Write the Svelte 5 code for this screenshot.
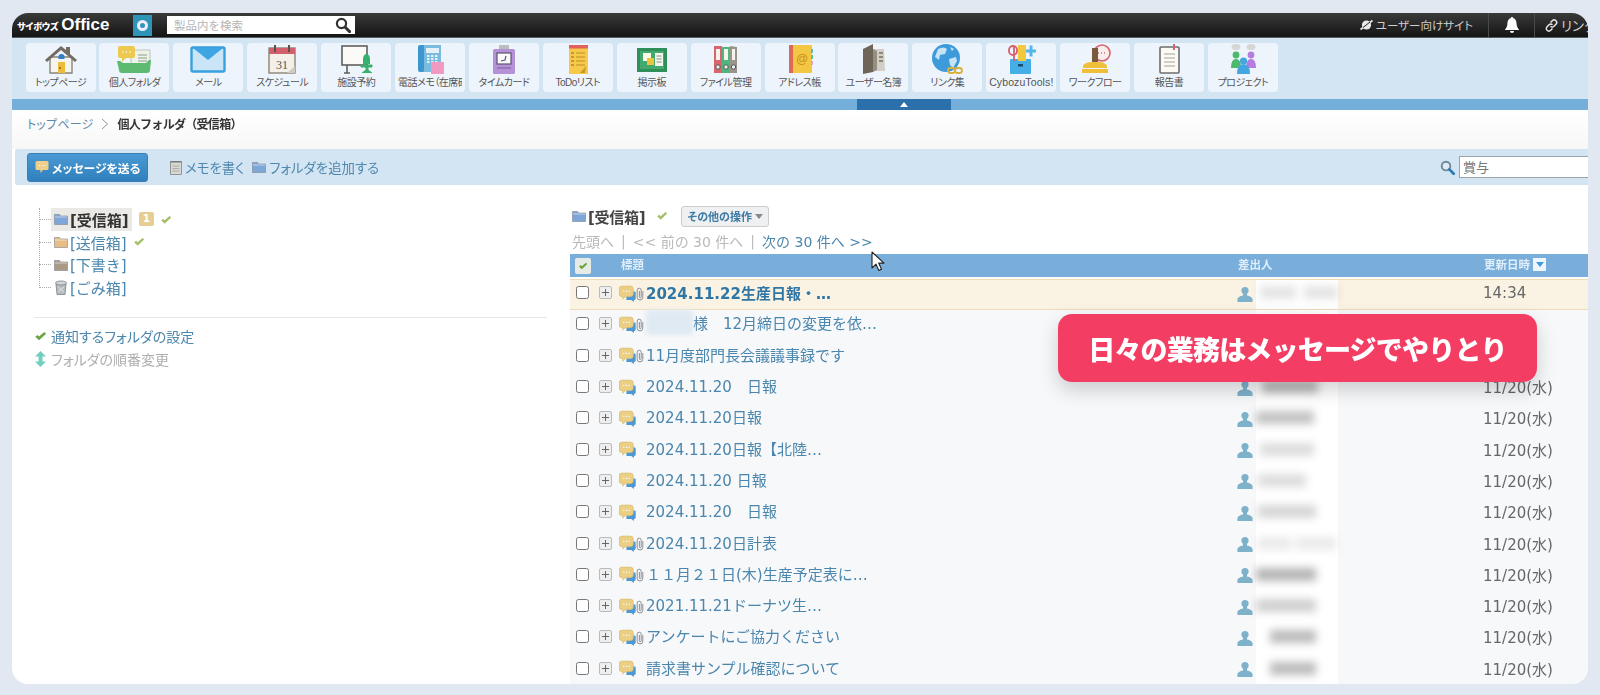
<script>
  const tools = [
    ['home', 'トップページ'], ['personal', '個人フォルダ'], ['mail', 'メール'], ['cal', 'スケジュール'],
    ['room', '施設予約'], ['phone', '電話メモ（在席確認）'], ['card', 'タイムカード'], ['todo', 'ToDoリスト'],
    ['board', '掲示板'], ['files', 'ファイル管理'], ['addr', 'アドレス帳'], ['users', 'ユーザー名簿'],
    ['globe', 'リンク集'], ['tools', 'CybozuTools!'], ['flow', 'ワークフロー'], ['report', '報告書'], ['project', 'プロジェクト']
  ];
  const folders = [
    { name: '[受信箱]', color: '#7ea6d8', active: true, badge: '1', check: true },
    { name: '[送信箱]', color: '#e5bd85', check: true },
    { name: '[下書き]', color: '#a89a85' },
    { name: '[ごみ箱]', trash: true }
  ];
  const rows = [
    { title: '2024.11.22生産日報・…', clip: true, bold: true, time: '14:34', smear: [[4, 36], [8, 34]], op: 0.2 },
    { title: '様　12月締日の変更を依…', clip: true, mask: true, time: '', smear: [[6, 60]], op: 0.2 },
    { title: '11月度部門長会議議事録です', clip: true, time: '', smear: [[6, 50]], op: 0.2 },
    { title: '2024.11.20　日報', time: '11/20(水)', smear: [[6, 56]], op: 0.5 },
    { title: '2024.11.20日報', time: '11/20(水)', smear: [[0, 58]], op: 0.45 },
    { title: '2024.11.20日報【北陸…', time: '11/20(水)', smear: [[4, 54]], op: 0.25 },
    { title: '2024.11.20 日報', time: '11/20(水)', smear: [[2, 48]], op: 0.25 },
    { title: '2024.11.20　日報', time: '11/20(水)', smear: [[2, 58]], op: 0.3 },
    { title: '2024.11.20日計表', clip: true, time: '11/20(水)', smear: [[2, 34], [4, 40]], op: 0.15 },
    { title: '１１月２１日(木)生産予定表に…', clip: true, time: '11/20(水)', smear: [[0, 60]], op: 0.55 },
    { title: '2021.11.21ドーナツ生…', clip: true, time: '11/20(水)', smear: [[0, 60]], op: 0.35 },
    { title: 'アンケートにご協力ください', clip: true, time: '11/20(水)', smear: [[14, 46]], op: 0.5 },
    { title: '請求書サンプル確認について', time: '11/20(水)', smear: [[14, 46]], op: 0.5 }
  ];
</script>

{#snippet check(size, color)}
  <svg class="ic" width={size} height={size * 0.8} viewBox="0 0 12 10"><path d="M1 5.5 L3 3.8 L4.6 5.4 L9.6 1 L11.4 2.6 L4.6 9 Z" fill={color} /></svg>
{/snippet}

{#snippet folder(color)}
  <svg class="ic" width="14" height="12" viewBox="0 0 14 12"><path d="M.5 1.5h5l1 1.5h7v8.5H.5z" fill={color} stroke="#7d8590" stroke-width=".6" /><path d="M1 4h12" stroke="#fff" stroke-opacity=".55" /></svg>
{/snippet}

{#snippet msg()}
  <svg class="ic" width="17" height="17" viewBox="0 0 16 16">
    <path d="M7 6h7.500a1.200 1.200 0 0 1 1.200 1.200v5.600a1.200 1.200 0 0 1-1.200 1.200H14v2l-2.500-2H7z" fill="#4d97d3" />
    <path d="M3 1h7.500A3 3 0 0 1 13.500 4v4a3 3 0 0 1-3 3H6l-2.500 2.300V11H3a3 3 0 0 1-3-3V4a3 3 0 0 1 3-3z" fill="#ebcf85" stroke="#d4b468" stroke-width=".5" />
    <path d="M4 6h1M6.500 6h1M9 6h1" stroke="#fff" stroke-width="1.100" />
  </svg>
{/snippet}

{#snippet clip()}
  <svg class="ic" width="8" height="14" viewBox="0 0 8 14"><path d="M6.800 4v6.200a2.800 2.800 0 0 1-5.600 0V3.200a2 2 0 0 1 4 0v6.600a.9.9 0 0 1-1.800 0V4" fill="none" stroke="#8a8f94" stroke-width="1" /></svg>
{/snippet}

{#snippet person()}
  <svg class="ic" width="16" height="17" viewBox="0 0 16 17"><circle cx="8" cy="4.600" r="3.600" fill="#7eb2cb" /><path d="M6 7h4v2.400c3 .6 5.600 1.800 5.600 4V16H.4v-2.600c0-2.200 2.600-3.400 5.600-4z" fill="#7eb2cb" /></svg>
{/snippet}

{#snippet lens(size)}
  <svg class="ic" width={size} height={size} viewBox="0 0 16 16"><circle cx="6.400" cy="6.400" r="4.600" fill="#dfeaf3" stroke="#6f8797" stroke-width="2" /><path d="M10 10l4.600 4.600" stroke="#2a7bb5" stroke-width="3" stroke-linecap="round" /></svg>
{/snippet}

{#snippet toolIcon(k)}
  <svg class="tool-ic" width="36" height="30" viewBox="0 0 36 30">
    {#if k === 'home'}
      <path d="M7 13h22v16H7z" fill="#f6f4ee" stroke="#8a8378" stroke-width="1.400" />
      <path d="M2 16 18 2l5 4V3h4v7l7 6-2 2L18 6 4 18z" fill="#736c62" />
      <path d="M15 18h7v11h-7z" fill="#eebc3b" /><path d="M15.500 13a3 3 0 0 1 6 0v2h-6z" fill="#2e7fc4" /><circle cx="17" cy="24" r="1" fill="#8a6a12" />
    {:else if k === 'personal'}
      <path d="M15 6h19v15H15z" fill="#eef3e8" stroke="#9aa89a" stroke-width=".6" /><path d="M22 11h9M22 14h9M22 17h9" stroke="#8b9a8b" />
      <path d="M4 2h13a2 2 0 0 1 2 2v8a2 2 0 0 1-2 2H10l-4 4v-4H4a2 2 0 0 1-2-2V4a2 2 0 0 1 2-2z" fill="#edc94f" />
      <path d="M6.500 8h1M10 8h1M13.500 8h1" stroke="#fff" stroke-width="1.400" />
      <path d="M1 17h3l3 2h23l3-3h2l-1 10q0 3-3 3H6q-3 0-3-3z" fill="#5dbb71" />
    {:else if k === 'mail'}
      <rect x="1.500" y="3.500" width="33" height="24" rx="1.500" fill="#c9e5f7" stroke="#39a0dd" stroke-width="2.400" />
      <path d="M3 4h30L18 16z" fill="#3ca5e2" />
    {:else if k === 'cal'}
      <rect x="5" y="4" width="26" height="25" fill="#f3f0ea" stroke="#8d8378" stroke-width="1.400" />
      <path d="M5 4h26v6H5z" fill="#d45f6c" /><path d="M11 1v7M25 1v7" stroke="#5b534b" stroke-width="2" />
      <text x="18" y="25" class="calnum">31</text>
      <path d="M23 29l8-7v7z" fill="#cfcac2" />
    {:else if k === 'room'}
      <rect x="4" y="2" width="25" height="19" fill="#fbfaf6" stroke="#5f5f5f" stroke-width="1.600" />
      <path d="M9 21v8M6 29h6" stroke="#5f5f5f" stroke-width="1.600" />
      <path d="M25 15a3.500 5 0 0 1 7 0v5h-7z" fill="#36b06a" /><path d="M23 21h11v2H23zM28 23h2v3h-2zM24 29l4-3h2l4 3" fill="#36b06a" stroke="#36b06a" />
    {:else if k === 'phone'}
      <rect x="6" y="1" width="7" height="27" rx="2" fill="#3d97cf" />
      <rect x="12" y="1" width="17" height="27" fill="#7cbbe0" />
      <rect x="14" y="4" width="13" height="5" fill="#e4f1f8" /><path d="M15 12h11M15 15h11M15 18h11" stroke="#e4f1f8" stroke-width="2" stroke-dasharray="2.400 1.600" />
      <rect x="19" y="18" width="13" height="12" fill="#f09ac2" />
    {:else if k === 'card'}
      <rect x="13" y="1" width="10" height="5" fill="#bdbdbd" />
      <rect x="7" y="5" width="22" height="25" rx="1.500" fill="#b591d6" />
      <rect x="11" y="9" width="14" height="11" fill="#fbfafc" stroke="#5e5470" stroke-width="1.200" /><path d="M15 17l4-1 1-4" fill="none" stroke="#5e5470" stroke-width="1.200" />
      <path d="M11 24h14" stroke="#8f6eb0" stroke-width="1.400" />
    {:else if k === 'todo'}
      <rect x="9" y="1" width="19" height="29" fill="#f7c94b" /><rect x="9" y="1" width="19" height="3.500" fill="#e0625a" />
      <path d="M16 9h9M16 13h9M16 17h9M16 21h9" stroke="#b98f24" /><path d="M11 9h3M11 13h3M11 17h3M11 21h3" stroke="#a05a2c" stroke-width="1.200" />
      <path d="M20 29l6-7-1 7z" fill="#c59a2c" />
    {:else if k === 'board'}
      <rect x="3" y="4" width="30" height="24" fill="#2f8f58" /><rect x="6" y="7" width="24" height="18" fill="#43a96d" />
      <rect x="9" y="9" width="8" height="8" fill="#fdfbe8" /><rect x="13" y="14" width="7" height="7" fill="#f0c33f" />
      <rect x="21" y="9" width="8" height="13" fill="#f3f6ee" /><path d="M22.500 12h5M22.500 15h5M22.500 18h5" stroke="#7b9a85" />
    {:else if k === 'files'}
      <path d="M6 2h8v27H6z" fill="#d9646f" /><path d="M14 3h8v26h-8z" fill="#4fb67d" /><path d="M22 2l7 1v26h-7z" fill="#9a948c" />
      <path d="M8 5h4v11H8zM16 5h4v11h-4zM24 5h3v11h-3z" fill="#f7f3ea" />
      <circle cx="10" cy="23" r="2.200" fill="#eee" stroke="#555" /><circle cx="18" cy="23" r="2.200" fill="#eee" stroke="#555" /><circle cx="25.500" cy="23" r="2.200" fill="#eee" stroke="#555" />
    {:else if k === 'addr'}
      <rect x="8" y="1" width="22" height="28" rx="1" fill="#f4c742" /><rect x="7" y="1" width="4" height="28" fill="#dd6a58" />
      <path d="M29 5h2v4h-2z" fill="#5ab7d6" /><path d="M29 11h2v4h-2z" fill="#64bf83" /><path d="M29 17h2v4h-2z" fill="#d9a3d2" />
      <text x="20" y="19" class="at">@</text>
    {:else if k === 'users'}
      <path d="M8 5 18 0v28L8 30z" fill="#6e6458" /><path d="M18 5h11l1 22H18z" fill="#d3cfc6" /><path d="M18 5l4 2v19l-4 2z" fill="#978e82" />
      <path d="M24 9h4M24 13h4M24 17h4" stroke="#8d877c" stroke-width="2" />
    {:else if k === 'globe'}
      <circle cx="17" cy="14" r="14" fill="#3d9bdc" />
      <path d="M9 5q6-3 9 0l-2 5-5 1-1 5-4-3zM20 15l7-2 1 4-4 7-3-3zM21 3l4 2-2 2z" fill="#dff0fa" opacity=".85" />
      <rect x="19" y="24" width="7" height="5" rx="2.500" fill="none" stroke="#d8b13d" stroke-width="1.800" /><rect x="26" y="24" width="7" height="5" rx="2.500" fill="none" stroke="#d8b13d" stroke-width="1.800" />
    {:else if k === 'tools'}
      <rect x="7" y="15" width="21" height="15" rx="1" fill="#45aee6" /><rect x="15" y="20" width="5" height="2.500" fill="#1b4b6d" />
      <rect x="15" y="1" width="8" height="16" fill="#f0c93c" />
      <rect x="6" y="2" width="8" height="9" rx="4" fill="none" stroke="#d85e70" stroke-width="1.800" /><path d="M11 2v15" stroke="#d85e70" stroke-width="1.800" />
      <path d="M28 1.500v11M23 7h10" stroke="#55b6ea" stroke-width="3" />
    {:else if k === 'flow'}
      <circle cx="25" cy="9" r="8" fill="#f8ecec" stroke="#d9636f" stroke-width="1.600" />
      <path d="M21 9h1M24 9h1M27 9h1" stroke="#a33" stroke-width="1.200" />
      <path d="M15 4h6v16h-6z" fill="#7a5a3c" /><path d="M6 22q2-4 9-4h6q7 0 9 4v2H6z" fill="#efbf3a" /><rect x="5" y="25" width="26" height="4" fill="#efbf3a" />
    {:else if k === 'report'}
      <rect x="9" y="3" width="19" height="26" rx="1" fill="#fbfaf5" stroke="#6d6d6d" stroke-width="1.600" />
      <path d="M13 10h11M13 14h11M13 18h11M13 22h11" stroke="#a5a29a" />
      <path d="M22 0h2v6h-2z" fill="#d7637a" />
    {:else if k === 'project'}
      <ellipse cx="11" cy="3" rx="4.500" ry="3" fill="#d6d6d6" /><ellipse cx="26" cy="3" rx="4.500" ry="3" fill="#d6d6d6" />
      <circle cx="11" cy="11" r="3.400" fill="#4cb96d" /><path d="M6 24q0-9 5-9t5 9z" fill="#4cb96d" />
      <circle cx="26" cy="11" r="3.400" fill="#b57de0" /><path d="M21 24q0-9 5-9t5 9z" fill="#b57de0" />
      <circle cx="18.500" cy="17" r="3.600" fill="#45a5e0" /><path d="M12 30q0-10 6.500-10T25 30z" fill="#45a5e0" />
    {/if}
  </svg>
{/snippet}

<div class="frame">
  <div class="screen">
    <div class="app">
      <header class="topbar">
        <div class="logo"><span class="logo-jp">サイボウズ</span><span class="logo-en">Office</span></div>
        <span class="app-ic"><span class="app-ring"></span></span>
        <div class="gsearch"><span>製品内を検索</span>
          <svg width="16" height="16" viewBox="0 0 16 16"><circle cx="6.500" cy="6.500" r="4.600" fill="none" stroke="#333" stroke-width="2.200" /><path d="M10 10l4.600 4.600" stroke="#333" stroke-width="3" stroke-linecap="round" /></svg>
        </div>
        <div class="top-right">
          <div class="tr-item site">
            <svg width="13" height="12" viewBox="0 0 13 12"><circle cx="6.500" cy="6" r="4.600" fill="#e8e8e8" /><path d="M.5 10.500 12.500 1.500" stroke="#e8e8e8" stroke-width="1.600" /><path d="M3 8.500 10 3" stroke="#222" stroke-width="1" /></svg>
            <span>ユーザー向けサイト</span>
          </div>
          <div class="tr-item bell">
            <svg width="14" height="16" viewBox="0 0 14 16"><path d="M7 0a1.200 1.200 0 0 1 1.200 1.300C11 2 11.400 4.400 11.600 7c.2 2.400 1 4 2.400 5.600V13H0v-.4C1.400 11 2.200 9.400 2.400 7 2.600 4.400 3 2 5.800 1.300A1.200 1.200 0 0 1 7 0z" fill="#fff" /><path d="M5 14h4a2 2 0 0 1-4 0z" fill="#fff" /></svg>
          </div>
          <div class="tr-item link">
            <svg width="13" height="13" viewBox="0 0 13 13"><path d="M5.500 3.500 7.300 1.700a2.500 2.500 0 0 1 3.600 3.600L9 7.200a2.500 2.500 0 0 1-3.500 0M7.500 9.500l-1.800 1.800a2.500 2.500 0 0 1-3.600-3.600L4 5.800a2.500 2.500 0 0 1 3.500 0" fill="none" stroke="#e8e8e8" stroke-width="1.500" /></svg>
            <span>リンク</span>
          </div>
        </div>
      </header>

      <nav class="toolbar">
        {#each tools as t}
          <div class="tile">
            {@render toolIcon(t[0])}
            <span class="tile-label" class:latin={t[0] === 'tools'}>{t[1]}</span>
          </div>
        {/each}
      </nav>

      <div class="band"><span class="band-tab"><i></i></span></div>

      <div class="crumbs">
        <span class="crumb-link">トップページ</span>
        <svg width="8" height="12" viewBox="0 0 8 12"><path d="M1 1l5.500 5L1 11" fill="none" stroke="#8d9aa5" /></svg>
        <b>個人フォルダ（受信箱）</b>
      </div>

      <div class="actions">
        <button class="send">
          <svg width="14" height="14" viewBox="0 0 14 14"><path d="M2 1h10a1.500 1.500 0 0 1 1.500 1.500v6A1.500 1.500 0 0 1 12 10H8l-2.500 3v-3H2A1.500 1.500 0 0 1 .5 8.500v-6A1.500 1.500 0 0 1 2 1z" fill="#eed08a" /><path d="M4 5.500h1M6.500 5.500h1M9 5.500h1" stroke="#fff" /></svg>
          メッセージを送る
        </button>
        <span class="act memo">
          <svg width="12" height="15" viewBox="0 0 12 15"><rect x=".5" y="1.500" width="11" height="13" fill="#d8d8d2" stroke="#777" stroke-width=".7" /><path d="M2 1v2M4 1v2M6 1v2M8 1v2M10 1v2" stroke="#555" stroke-width=".8" /><path d="M2.500 6h7M2.500 8.500h7M2.500 11h7" stroke="#999" stroke-width=".7" /></svg>
          メモを書く
        </span>
        <span class="act addf">{@render folder('#7ea6d8')} フォルダを追加する</span>
        <div class="find">
          {@render lens(15)}
          <div class="find-input">賞与</div>
        </div>
      </div>

      <main class="main">
        <aside class="side">
          <ul class="tree">
            {#each folders as f}
              <li class="tree-row">
                <span class="dots"></span>
                <span class="fname" class:active={f.active}>
                  {#if f.trash}
                    <svg class="ic" width="14" height="15" viewBox="0 0 14 15"><path d="M2 4h10l-1 10.500H3z" fill="#b7bdbd" stroke="#7b8384" stroke-width=".8" /><ellipse cx="7" cy="3" rx="5.500" ry="2" fill="#d2d6d6" stroke="#7b8384" stroke-width=".8" /><path d="M4 7l6 5M10 7l-6 5" stroke="#eef" stroke-width=".7" /></svg>
                  {:else}
                    {@render folder(f.color)}
                  {/if}
                  <span>{f.name}</span>
                </span>
                {#if f.badge}<span class="badge">{f.badge}</span>{/if}
                {#if f.check}<span class="tick">{@render check(12, '#a5c069')}</span>{/if}
              </li>
            {/each}
          </ul>
          <hr class="rule" />
          <div class="side-link">{@render check(13, '#6aa53f')}<span>通知するフォルダの設定</span></div>
          <div class="side-link off">
            <svg class="ic" width="13" height="16" viewBox="0 0 13 16"><path d="M6.500 0 12 5.500H8.500v5H12L6.500 16 1 10.500h3.500v-5H1z" fill="#72cfc0" /></svg>
            <span>フォルダの順番変更</span>
          </div>
        </aside>

        <section class="list">
          <div class="list-head">
            {@render folder('#7ea6d8')}
            <strong>[受信箱]</strong>
            <span class="tick2">{@render check(12, '#a5c069')}</span>
            <button class="other">その他の操作<i></i></button>
          </div>
          <div class="paging">
            <span class="off">先頭へ</span><span class="sep">|</span><span class="off">&lt;&lt; 前の 30 件へ</span><span class="sep">|</span><span class="on">次の 30 件へ &gt;&gt;</span>
          </div>
          <div class="thead">
            <span class="th-check">{@render check(10, '#6aa53f')}</span>
            <span class="th-title">標題</span>
            <span class="th-from">差出人</span>
            <span class="th-date">更新日時<i><b></b></i></span>
          </div>
          <div class="rows">
            {#each rows as r, i}
              <div class="row" class:cream={i === 0}>
                <span class="cb"></span>
                <span class="plus"></span>
                <span class="m">{@render msg()}</span>
                <span class="c">{#if r.clip}{@render clip()}{/if}</span>
                <span class="title" class:bold={r.bold}>{#if r.mask}<span class="mask"></span>{/if}{r.title}</span>
                <span class="p">{@render person()}</span>
                <span class="strip">
                  {#each r.smear as s}
                    <span class="smear" style="margin-left:{s[0]}px;width:{s[1]}px;opacity:{r.op}"></span>
                  {/each}
                </span>
                <span class="time">{r.time}</span>
              </div>
            {/each}
          </div>
        </section>
      </main>
    </div>

    <svg class="cursor" width="14" height="21" viewBox="0 0 14 21"><path d="M1 1v16l4-3.800 2.800 6.300 2.700-1.200-2.800-6.200H13z" fill="#fff" stroke="#222" stroke-width="1.100" stroke-linejoin="round" /></svg>
    <div class="callout">日々の業務はメッセージでやりとり</div>
  </div>
</div>

<style>
  :global(body) { margin: 0; background: #e2e8f1; }
  * { box-sizing: border-box; }
  .frame {
    width: 1600px; height: 695px; padding: 13px 12px 11px;
    background: #e2e8f1; overflow: hidden;
    font-family: "DejaVu Sans", "Noto Sans CJK JP", sans-serif;
  }
  .screen { position: relative; width: 1576px; height: 671px; background: #fff; border-radius: 16px; overflow: hidden; }
  .app { width: 1576px; height: 671px; filter: blur(.45px); display: flex; flex-direction: column; }
  .ic { display: block; flex: none; }

  .topbar {
    height: 25px; flex: none; display: flex; align-items: center; color: #eee;
    background: linear-gradient(#3a3a3a, #141414); border-bottom: 1px solid #555e5e;
  }
  .logo { display: flex; align-items: baseline; margin-left: 5px; width: 116px; font-family: "Liberation Sans", "Noto Sans CJK JP", sans-serif; }
  .logo-jp { font-size: 9px; font-weight: 900; font-feature-settings: "palt"; color: #fff; margin-right: 3px; letter-spacing: -.3px; }
  .logo-en { font-size: 17px; font-weight: 700; color: #fff; }
  .app-ic { width: 19px; height: 21px; background: #2e94b8; display: flex; align-items: center; justify-content: center; }
  .app-ring { width: 11px; height: 11px; border: 3px solid #eef; border-radius: 50%; }
  .gsearch {
    margin-left: 15px; width: 188px; height: 18px; background: #fff; color: #b5b5b5; font-size: 11.500px;
    font-family: "Noto Sans CJK JP", sans-serif; display: flex; align-items: center; justify-content: space-between; padding: 0 4px 0 7px;
  }
  .top-right { margin-left: auto; display: flex; height: 100%; align-items: center; }
  .tr-item { display: flex; align-items: center; height: 100%; font-family: "Noto Sans CJK JP", sans-serif; font-size: 11.500px; color: #cfcfcf; gap: 3px; font-feature-settings: "palt"; }
  .tr-item svg { flex: none; }
  .site { padding-right: 15px; border-right: 1px solid #4a4a4a; }
  .bell { width: 46px; justify-content: center; border-right: 1px solid #4a4a4a; }
  .link { padding-left: 10px; width: 53px; white-space: nowrap; overflow: hidden; flex: none; font-size: 13.500px; }

  .toolbar { height: 61px; flex: none; background: #d3e5f2; display: flex; gap: 3.900px; padding: 5px 0 0 13.600px; }
  .tile {
    width: 70px; height: 49px; background: #edf4fb; border-radius: 4px; display: flex; flex-direction: column;
    align-items: center; overflow: hidden; padding: 1px 3px 0; flex: none;
  }
  .tool-ic { display: block; flex: none; }
  .tile-label {
    display: block; width: 100%; text-align: center; white-space: nowrap; overflow: hidden; margin-top: 1px;
    font-size: 10px; line-height: 15px; color: #555; font-feature-settings: "palt"; letter-spacing: -.5px;
    font-family: "Liberation Sans", "Noto Sans CJK JP", sans-serif;
  }
  .tile-label.latin { letter-spacing: .1px; font-size: 10.500px; }
  .calnum { font: 12px "Liberation Serif", serif; fill: #555; text-anchor: middle; }
  .at { font: 12px "Liberation Sans", sans-serif; fill: #c98f1e; text-anchor: middle; }

  .band { height: 11px; flex: none; background: #74aedb; padding-left: 845px; }
  .band-tab { display: flex; width: 94px; height: 11px; background: #2b70ab; align-items: center; justify-content: center; }
  .band-tab i { width: 0; height: 0; border: 4.500px solid transparent; border-top: 0; border-bottom: 5px solid #fff; }

  .crumbs {
    height: 39px; flex: none; background: linear-gradient(#fff, #f7f7f7); display: flex; align-items: center; gap: 8px; padding: 0 0 12px 15px;
    font-family: "Noto Sans CJK JP", sans-serif;
  }
  .crumb-link { font-size: 12px; color: #5f89a8; font-feature-settings: "palt"; letter-spacing: .2px; }
  .crumbs b { font-size: 12px; letter-spacing: -.7px; color: #333; }

  .actions {
    height: 36px; flex: none; margin-left: 3px; background: #d3e5f2; display: flex; align-items: center; padding-left: 12px;
    font-family: "Noto Sans CJK JP", sans-serif; font-feature-settings: "palt"; border-radius: 2px 0 0 2px;
  }
  .send {
    width: 121px; height: 29px; background: linear-gradient(#4a99d3, #2f80bd); border: 1px solid #3a7eb3; border-radius: 3px; color: #fff;
    font: 700 11.800px "Noto Sans CJK JP", sans-serif; font-feature-settings: "palt"; display: flex; align-items: center; gap: 3px; padding: 0 0 0 7px; white-space: nowrap;
  }
  .act { display: flex; align-items: center; gap: 3px; color: #4f87ae; font-size: 13.400px; white-space: nowrap; }
  .memo { margin-left: 22px; }
  .addf { margin-left: 8px; }
  .find { margin-left: auto; display: flex; align-items: center; gap: 4px; }
  .find-input { width: 129px; height: 22px; background: #fff; border: 1px solid #9aa4ac; border-right: 0; color: #777; font-size: 13px; line-height: 20px; padding-left: 3px; }

  .main { flex: 1; display: flex; min-height: 0; }
  .side { width: 558px; flex: none; padding: 23px 0 0 22px; }
  .tree { list-style: none; margin: 0 0 0 5px; padding: 0; position: relative; }
  .tree::before { content: ""; position: absolute; left: 0; top: 0; bottom: 11px; border-left: 1px dotted #aaa; }
  .tree-row { height: 22.700px; display: flex; align-items: center; font-size: 15px; color: #4a86ad; }
  .dots { width: 12px; border-top: 1px dotted #aaa; flex: none; }
  .fname { display: flex; align-items: center; gap: 2px; height: 23px; padding: 0 3px; }
  .fname.active { background: #ebe9e6; color: #333; font-weight: 700; }
  .badge { margin-left: 7px; width: 15px; height: 14px; background: #e6cd91; color: #fff; font-size: 11px; font-weight: 700; border-radius: 2px; text-align: center; line-height: 14px; }
  .tick { margin-left: 3px; }
  .badge + .tick { margin-left: 6px; }
  .rule { border: 0; border-top: 1px solid #e6e6e6; margin: 18px 23px 7px 0; }
  .side-link { display: flex; align-items: center; gap: 4px; height: 22.500px; font: 14px "Noto Sans CJK JP", sans-serif; font-feature-settings: "palt"; color: #4a86ad; }
  .side-link.off { color: #aeaeae; }

  .list { flex: 1; min-width: 0; }
  .list-head { height: 44px; padding: 18px 0 0 2px; display: flex; align-items: center; gap: 2px; font-size: 15px; color: #444; }
  .list-head strong { font-weight: 700; letter-spacing: -.3px; }
  .tick2 { margin: 0 0 0 9px; }
  .other {
    margin-left: 11px; width: 88px; height: 21px; padding: 0; border: 1px solid #ccc; border-radius: 3px; background: #eef0f1; color: #3d7aa5;
    font: 700 11px "Noto Sans CJK JP", sans-serif; font-feature-settings: "palt"; display: flex; align-items: center; justify-content: center; gap: 3px;
  }
  .other i { width: 0; height: 0; border: 4px solid transparent; border-bottom: 0; border-top: 5px solid #888; }
  .paging { height: 25px; padding: 0 0 2px 2px; display: flex; align-items: center; font-size: 14px; white-space: nowrap; }
  .paging .off { color: #b9b9b9; }
  .paging .on { color: #4a86ad; }
  .sep { color: #bbb; margin: 0 7px; }

  .thead { height: 23px; background: #78aed9; color: #dfeefa; font: 700 11.500px "Noto Sans CJK JP", sans-serif; display: flex; align-items: center; }
  .th-check { width: 16px; height: 16px; margin-left: 5px; background: #e6ebe6; border-radius: 2px; display: flex; align-items: center; justify-content: center; }
  .th-title { margin-left: 30px; width: 617px; padding-bottom: 3px; }
  .th-from { width: 246px; padding-bottom: 3px; }
  .th-date { display: flex; align-items: center; gap: 3px; white-space: nowrap; padding-bottom: 3px; }
  .th-date i { width: 13px; height: 13px; background: #eef6fb; display: flex; align-items: center; justify-content: center; }
  .th-date b { width: 0; height: 0; border: 4px solid transparent; border-bottom: 0; border-top: 5px solid #3f9ad8; }

  .rows { margin-top: 2px; background: #f7f8fa; }
  .row {
    height: 31.300px; display: grid; align-items: center; padding: 0 0 4px 6px;
    grid-template-columns: 23px 20px 17px 10px 591px 19px 82px 145px auto;
    font-size: 15px; color: #666;
  }
  .row.cream { background: #faf3e4; border: 1px solid #eddcb9; border-width: 1px 0; }
  .cb { width: 13px; height: 13px; background: #fff; border: 1px solid #777; border-radius: 2.500px; }
  .plus { width: 13px; height: 13px; border: 1px solid #bbb; border-radius: 2px; background: linear-gradient(#666,#666) center/7px 1px no-repeat, linear-gradient(#666,#666) center/1px 7px no-repeat, #eee; }
  .m { margin-top: 1px; }
  .c { margin-top: 2px; }
  .p { margin-top: 3px; }
  .title { color: #4a86ad; white-space: nowrap; display: flex; align-items: center; margin-bottom: 2px; }
  .title.bold { font-weight: 700; color: #2f76a5; margin-bottom: 0; }
  .mask { width: 47px; height: 25px; background: #dfeaf2; filter: blur(2px); }
  .strip { align-self: stretch; margin-bottom: -4px; background: #fff; display: flex; align-items: center; padding-bottom: 4px; }
  .smear { display: block; height: 13px; background: #777; filter: blur(4px); flex: none; }
  .time { grid-column: 9; white-space: nowrap; }

  .cursor { position: absolute; left: 859px; top: 238px; }
  .callout {
    position: absolute; left: 1046px; top: 301px; width: 479px; height: 68px; background: #f33d63; border-radius: 14px; color: #fff;
    font: 900 27px "Noto Sans CJK JP", sans-serif; letter-spacing: -.8px; display: flex; align-items: center; justify-content: center;
    box-shadow: 0 8px 20px rgba(0, 0, 0, .18);
  }
</style>
